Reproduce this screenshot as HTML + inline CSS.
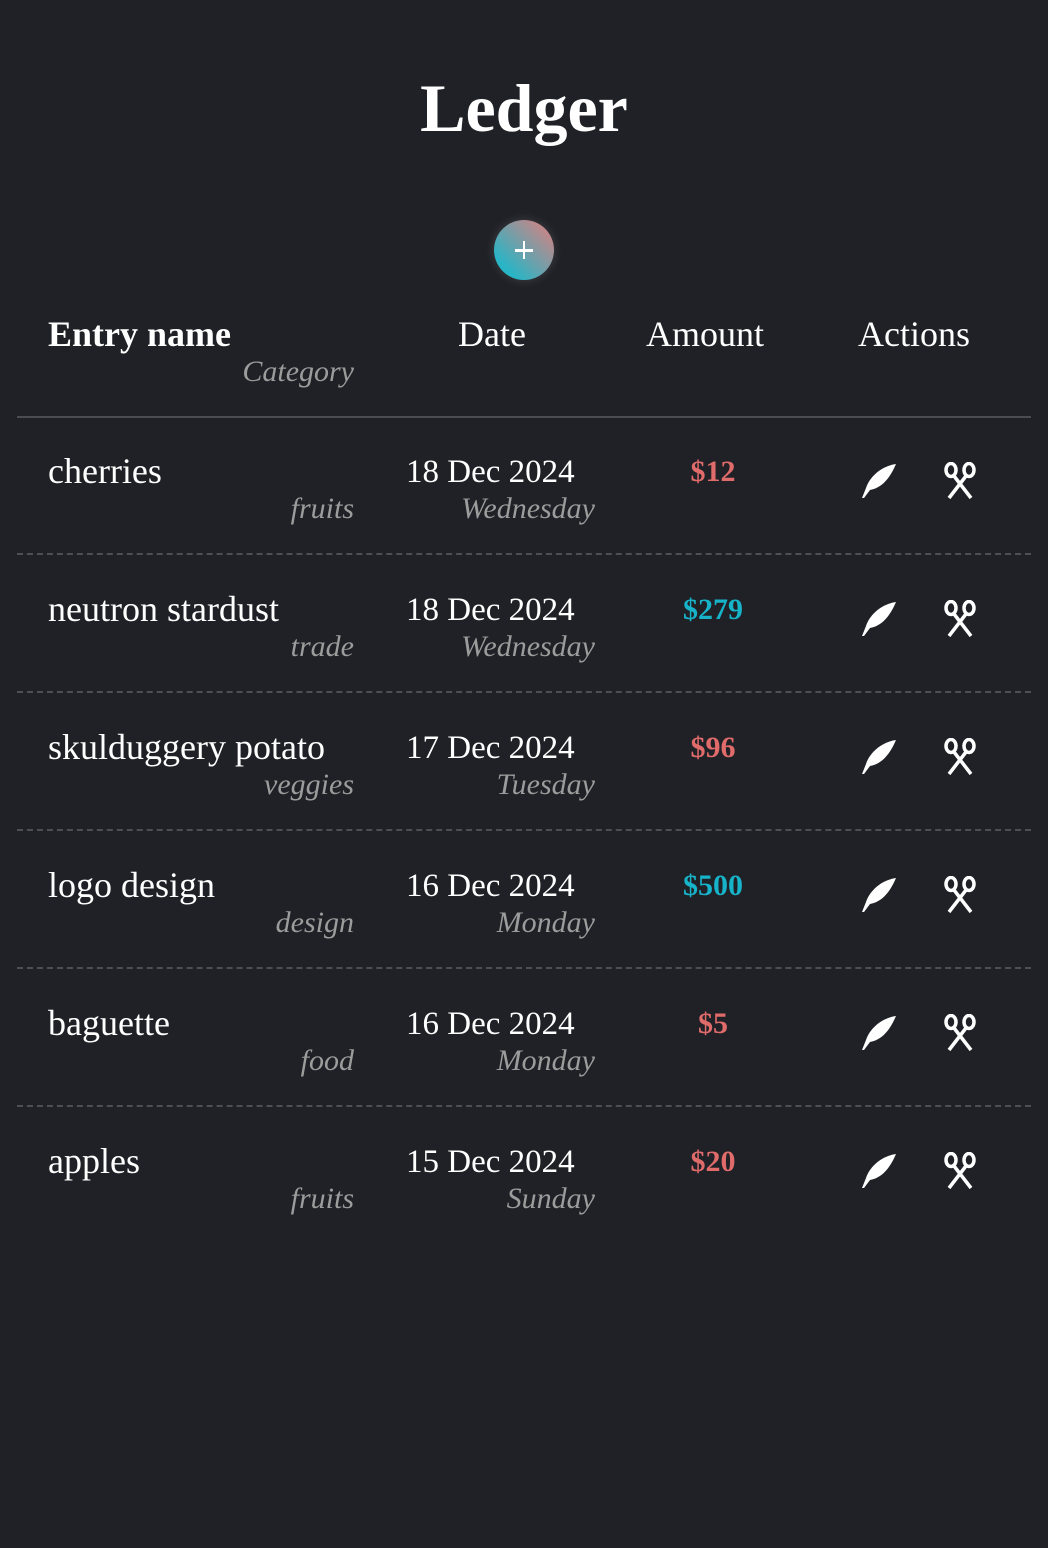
<!DOCTYPE html>
<html><head><meta charset="utf-8"><style>
html,body{margin:0;padding:0}
body{width:1048px;height:1548px;background:#1f2126;position:relative;overflow:hidden;font-family:"Liberation Serif",serif;color:#fff}
.a{position:absolute;white-space:nowrap;line-height:1}
h1{position:absolute;top:74px;left:0;width:1048px;text-align:center;margin:0;font-size:68px;font-weight:bold;line-height:1;letter-spacing:0px}
.btn{position:absolute;left:494px;top:220px;width:60px;height:60px;border-radius:50%;background:linear-gradient(to bottom left,#d98080 5%,#29b5c6 80%);box-shadow:0 0 10px rgba(255,255,255,.15)}
.btn:before{content:"";position:absolute;left:21px;top:29px;width:18px;height:2.5px;background:#fff}
.btn:after{content:"";position:absolute;left:28.8px;top:21px;width:2.5px;height:18px;background:#fff}
.hd{font-size:36px;top:316px}
.hl{position:absolute;left:17px;width:1014px;top:416px;height:2px;background:#4a4c50}
.dl{position:absolute;left:17px;width:1014px;height:0;border-top:2px dashed #4d4f53}
.nm{font-size:36px;left:48px}
.cat{font-size:30px;font-style:italic;color:#9c9c9c;right:694px}
.dt{font-size:33px;left:406px}
.wd{font-size:30px;font-style:italic;color:#9c9c9c;right:453px}
.amt{font-size:30px;font-weight:bold;width:140px;left:643px;text-align:center}
.r{color:#e06b6b}.c{color:#17b3c9}
svg{position:absolute}
</style></head><body>
<h1>Ledger</h1>
<div class="btn"></div>
<div class="a hd" style="left:48px;font-weight:bold">Entry name</div>
<div class="a" style="top:357px;right:694px;font-size:30px;font-style:italic;color:#9c9c9c">Category</div>
<div class="a hd" style="left:458px">Date</div>
<div class="a hd" style="left:646px">Amount</div>
<div class="a hd" style="left:858px">Actions</div>
<div class="hl"></div>

<div class="a nm" style="top:453px">cherries</div>
<div class="a cat" style="top:494px">fruits</div>
<div class="a dt" style="top:456px">18 Dec 2024</div>
<div class="a wd" style="top:494px">Wednesday</div>
<div class="a amt r" style="top:457px">$12</div>
<div class="dl" style="top:553px"></div>

<div class="a nm" style="top:591px">neutron stardust</div>
<div class="a cat" style="top:632px">trade</div>
<div class="a dt" style="top:594px">18 Dec 2024</div>
<div class="a wd" style="top:632px">Wednesday</div>
<div class="a amt c" style="top:595px">$279</div>
<div class="dl" style="top:691px"></div>

<div class="a nm" style="top:729px">skulduggery potato</div>
<div class="a cat" style="top:770px">veggies</div>
<div class="a dt" style="top:732px">17 Dec 2024</div>
<div class="a wd" style="top:770px">Tuesday</div>
<div class="a amt r" style="top:733px">$96</div>
<div class="dl" style="top:829px"></div>

<div class="a nm" style="top:867px">logo design</div>
<div class="a cat" style="top:908px">design</div>
<div class="a dt" style="top:870px">16 Dec 2024</div>
<div class="a wd" style="top:908px">Monday</div>
<div class="a amt c" style="top:871px">$500</div>
<div class="dl" style="top:967px"></div>

<div class="a nm" style="top:1005px">baguette</div>
<div class="a cat" style="top:1046px">food</div>
<div class="a dt" style="top:1008px">16 Dec 2024</div>
<div class="a wd" style="top:1046px">Monday</div>
<div class="a amt r" style="top:1009px">$5</div>
<div class="dl" style="top:1105px"></div>

<div class="a nm" style="top:1143px">apples</div>
<div class="a cat" style="top:1184px">fruits</div>
<div class="a dt" style="top:1146px">15 Dec 2024</div>
<div class="a wd" style="top:1184px">Sunday</div>
<div class="a amt r" style="top:1147px">$20</div>

<svg width="0" height="0"><defs>
<g id="f"><path d="M2 36 L6 26 C10 14 22 4 36 2 C30 16 22 26 10 28 L4 36 Z" fill="#fff"/></g>
<g id="s" fill="none" stroke="#fff" stroke-width="3.5"><ellipse cx="10" cy="8" rx="5" ry="6.5"/><ellipse cx="28" cy="8" rx="5" ry="6.5"/><path d="M13 14 L30 36 M25 14 L8 36"/></g>
</defs></svg>
<svg style="left:860px;top:462px" width="40" height="40"><use href="#f"/></svg>
<svg style="left:941px;top:462px" width="40" height="40"><use href="#s"/></svg>
<svg style="left:860px;top:600px" width="40" height="40"><use href="#f"/></svg>
<svg style="left:941px;top:600px" width="40" height="40"><use href="#s"/></svg>
<svg style="left:860px;top:738px" width="40" height="40"><use href="#f"/></svg>
<svg style="left:941px;top:738px" width="40" height="40"><use href="#s"/></svg>
<svg style="left:860px;top:876px" width="40" height="40"><use href="#f"/></svg>
<svg style="left:941px;top:876px" width="40" height="40"><use href="#s"/></svg>
<svg style="left:860px;top:1014px" width="40" height="40"><use href="#f"/></svg>
<svg style="left:941px;top:1014px" width="40" height="40"><use href="#s"/></svg>
<svg style="left:860px;top:1152px" width="40" height="40"><use href="#f"/></svg>
<svg style="left:941px;top:1152px" width="40" height="40"><use href="#s"/></svg>
</body></html>
